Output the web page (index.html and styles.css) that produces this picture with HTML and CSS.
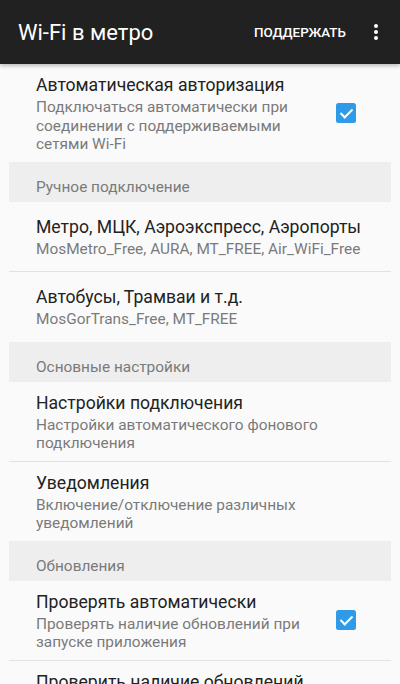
FILE: index.html
```html
<html lang="ru">
  <head>
    <meta charset="UTF-8" />
    <meta name="viewport" content="width=device-width, initial-scale=1.0" />
    <title>Wi-Fi в метро</title>
    <link rel="stylesheet" href="styles.css">
  </head>

  <body>
    <header class="app-bar">
      <h1 class="app-bar__title">Wi-Fi в метро</h1>
      <span class="app-bar__action">ПОДДЕРЖАТЬ</span>
      <span class="app-bar__menu"><i></i><i></i><i></i></span>
    </header>

    <section class="prefs">
      <div class="pref">
        <div class="pref__text">
          <div class="pref__title">Автоматическая авторизация</div>
          <div class="pref__summary">Подключаться автоматически при соединении с поддерживаемыми сетями Wi-Fi</div>
        </div>
        <span class="checkbox"></span>
      </div>

      <div class="prefs__header">Ручное подключение</div>
      <div class="pref">
        <div class="pref__text">
          <div class="pref__title">Метро, МЦК, Аэроэкспресс, Аэропорты</div>
          <div class="pref__summary">MosMetro_Free, AURA, MT_FREE, Air_WiFi_Free</div>
        </div>
      </div>
      <div class="pref">
        <div class="pref__text">
          <div class="pref__title">Автобусы, Трамваи и т.д.</div>
          <div class="pref__summary">MosGorTrans_Free, MT_FREE</div>
        </div>
      </div>

      <div class="prefs__header">Основные настройки</div>
      <div class="pref">
        <div class="pref__text">
          <div class="pref__title">Настройки подключения</div>
          <div class="pref__summary">Настройки автоматического фонового подключения</div>
        </div>
      </div>
      <div class="pref">
        <div class="pref__text">
          <div class="pref__title">Уведомления</div>
          <div class="pref__summary">Включение/отключение различных уведомлений</div>
        </div>
      </div>

      <div class="prefs__header">Обновления</div>
      <div class="pref">
        <div class="pref__text">
          <div class="pref__title">Проверять автоматически</div>
          <div class="pref__summary">Проверять наличие обновлений при запуске приложения</div>
        </div>
        <span class="checkbox"></span>
      </div>
      <div class="pref">
        <div class="pref__text">
          <div class="pref__title">Проверить наличие обновлений</div>
          <div class="pref__summary">Проверить, доступна ли новая версия приложения</div>
        </div>
      </div>
    </section>
  </body>
</html>
```

FILE: styles.css
```css
* {
  box-sizing: border-box;
}
body {
  margin: 0;
  background-color: #fafafa;
  font-family: Roboto, "Noto Sans", sans-serif;
  overflow: hidden;
}

.app-bar {
  height: 64px;
  background-color: #212121;
  color: #ffffff;
  display: flex;
  align-items: center;
  padding: 0 22px 0 18px;
  box-shadow: 0 2px 4px rgba(0, 0, 0, 0.25);
  position: relative;
}
.app-bar__title {
  flex: 1;
  margin: 0;
  font-size: 22px;
  font-weight: 400;
}
.app-bar__action {
  font-size: 13.4px;
  font-weight: 500;
  margin-right: 28px;
}
.app-bar__menu {
  display: flex;
  flex-direction: column;
  gap: 2px;
}
.app-bar__menu i {
  width: 4px;
  height: 4px;
  border-radius: 50%;
  background-color: #ffffff;
}

.prefs {
  margin: 0 9px;
}
.prefs__header {
  height: 40px;
  background-color: #eeeeee;
  color: #7a7a7a;
  font-size: 15.4px;
  display: flex;
  align-items: center;
  padding-left: 27px;
  padding-top: 10px;
}
.pref {
  display: flex;
  align-items: center;
  min-height: 70px;
  padding: 8px 16px 8px 27px;
  border-bottom: 1px solid #e2e2e2;
}
.pref:has(+ .prefs__header) {
  border-bottom: none;
}
.pref__text {
  flex: 1;
}
.pref__title {
  font-size: 17.6px;
  line-height: 26px;
  color: #222222;
}
.pref__summary {
  font-size: 15.4px;
  line-height: 18.5px;
  color: #7a7a7a;
}
.checkbox {
  width: 20px;
  height: 20px;
  border-radius: 2.5px;
  background-color: #2f9be8;
  position: relative;
  flex-shrink: 0;
  margin: 0 19px 0 16px;
}
.checkbox::after {
  content: "";
  position: absolute;
  left: 7px;
  top: 3px;
  width: 5px;
  height: 10px;
  border: solid #ffffff;
  border-width: 0 2.5px 2.5px 0;
  transform: rotate(45deg);
}
```
